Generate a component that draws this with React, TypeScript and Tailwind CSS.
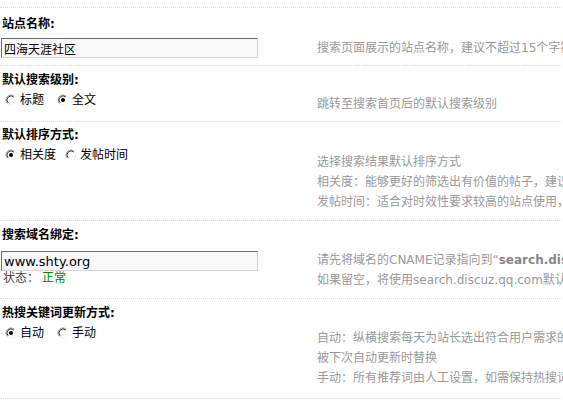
import React from "react";

function Radio({ checked }: { checked?: boolean }) {
  return (
    <svg width="12" height="12" viewBox="0 0 12 12" className="shrink-0 block">
      <circle cx="6" cy="6" r="5" fill="#ffffff" />
      <path d="M2.46 9.54 A5 5 0 0 1 9.54 2.46" stroke="#9a9a9a" strokeWidth="1" fill="none" />
      <path d="M3.17 8.83 A4 4 0 0 1 8.83 3.17" stroke="#3a3a3a" strokeWidth="1" fill="none" />
      <path d="M9.54 2.46 A5 5 0 0 1 2.46 9.54" stroke="#f2f2f2" strokeWidth="1" fill="none" />
      {checked && <circle cx="6" cy="6" r="2" fill="#000000" />}
    </svg>
  );
}

const sep = "border-t border-dotted border-[#cfdbe3]";
const title = "flex items-center pt-[4px] pl-[2px] font-bold text-black overflow-hidden";
const tips = "text-[#999999] whitespace-nowrap";
const line = "h-[20px] leading-[20px] overflow-visible";
const inputCls =
  "block w-[257px] h-[20px] pl-[2px] bg-[#f9f9f9] text-black outline-none border border-t-[#6d6d6d] border-l-[#6d6d6d] border-b-[#d4d4d4] border-r-[#d4d4d4]";

export default function App() {
  return (
    <div className="w-[563px] h-[405px] overflow-hidden bg-white text-[12px] font-['DejaVu_Sans','Noto_Sans_CJK_SC',sans-serif]">
      <div className="w-[760px]">
        <div className="h-[7px]" />

        {/* Section 1 */}
        <div className={sep}>
          <div className={`${title} h-[28px]`}>站点名称:</div>
          <div className="flex mt-[2px] pb-[7px]">
            <div className="w-[317px] pl-[1px]">
              <input
                readOnly
                defaultValue="四海天涯社区"
                className={`${inputCls} text-[12px] font-['Noto_Sans_CJK_SC',sans-serif]`}
              />
            </div>
            <div className={tips}>
              <div className={line}>搜索页面展示的站点名称，建议不超过15个字符</div>
            </div>
          </div>
        </div>

        {/* Section 2 */}
        <div className={sep}>
          <div className={`${title} h-[24px]`}>默认搜索级别:</div>
          <div className="flex h-[20px] mb-[11px]">
            <div className="w-[317px] h-[20px] flex items-center pl-[5px] text-black">
              <Radio />
              <span className="ml-[3px]">标题</span>
              <span className="ml-[13px]">
                <Radio checked />
              </span>
              <span className="ml-[3px]">全文</span>
            </div>
            <div className={`${tips} pt-[4px]`}>
              <div className={line}>跳转至搜索首页后的默认搜索级别</div>
            </div>
          </div>
        </div>

        {/* Section 3 */}
        <div className={sep}>
          <div className={`${title} h-[22px]`}>默认排序方式:</div>
          <div className="flex mt-[1px] pb-[8px]">
            <div className="w-[317px] h-[20px] flex items-center pl-[5px] text-black">
              <Radio checked />
              <span className="ml-[3px]">相关度</span>
              <span className="ml-[9px]">
                <Radio />
              </span>
              <span className="ml-[3px]">发帖时间</span>
            </div>
            <div className={`${tips} pt-[7px]`}>
              <div className={line}>选择搜索结果默认排序方式</div>
              <div className={line}>相关度：能够更好的筛选出有价值的帖子，建议一般站点使用</div>
              <div className={line}>发帖时间：适合对时效性要求较高的站点使用，如新闻资讯类站点</div>
            </div>
          </div>
        </div>

        {/* Section 4 */}
        <div className={sep}>
          <div className={`${title} h-[24px]`}>搜索域名绑定:</div>
          <div className="flex mt-[5px] pb-[8px]">
            <div className="w-[317px] pl-[1px]">
              <input
                readOnly
                defaultValue="www.shty.org"
                className={`${inputCls} mt-[1px] text-[13px] font-['DejaVu_Sans',sans-serif]`}
              />
              <div className="h-[14px] leading-[14px] pl-[2px] text-[#444444] whitespace-nowrap">
                状态：<span className="ml-[3px] text-[#008800]">正常</span>
              </div>
            </div>
            <div className={tips}>
              <div className={line}>
                请先将域名的CNAME记录指向到“<span className="font-bold text-[#888888]">search.discuz.qq.com</span>”
              </div>
              <div className={line}>如果留空，将使用search.discuz.qq.com默认域名</div>
            </div>
          </div>
        </div>

        {/* Section 5 */}
        <div className={sep}>
          <div className={`${title} h-[24px]`}>热搜关键词更新方式:</div>
          <div className="flex pb-[10px]">
            <div className="w-[317px] h-[20px] flex items-center pl-[5px] text-black">
              <Radio checked />
              <span className="ml-[3px]">自动</span>
              <span className="ml-[13px]">
                <Radio />
              </span>
              <span className="ml-[3px]">手动</span>
            </div>
            <div className={`${tips} pt-[5px]`}>
              <div className={line}>自动：纵横搜索每天为站长选出符合用户需求的热搜词，手动设置的热搜词会</div>
              <div className={line}>被下次自动更新时替换</div>
              <div className={line}>手动：所有推荐词由人工设置，如需保持热搜词的时效性，请定期更新</div>
            </div>
          </div>
        </div>

        {/* Section 6 */}
        <div className={sep}>
          <div className={`${title} h-[24px]`}>热搜关键词:</div>
        </div>
      </div>
    </div>
  );
}
